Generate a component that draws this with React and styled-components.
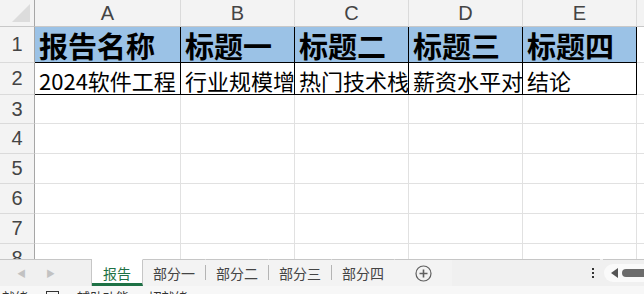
import React from 'react'
import styled, { createGlobalStyle } from 'styled-components'

const GlobalStyle = createGlobalStyle`
  html, body {
    margin: 0;
    padding: 0;
    background: #ffffff;
  }
  * {
    box-sizing: border-box;
  }
`

const columns = ['A', 'B', 'C', 'D', 'E']
const headerRow = ['报告名称', '标题一', '标题二', '标题三', '标题四']
const dataRow = ['2024软件工程', '行业规模增', '热门技术栈', '薪资水平对', '结论']
const emptyRows = [3, 4, 5, 6, 7, 8]
const sheets = ['报告', '部分一', '部分二', '部分三', '部分四']

const App = () => {
  return (
    <Window>
      <GlobalStyle />
      <Sheet>
        <Corner>
          <svg width='34' height='26' viewBox='0 0 34 26'>
            <polygon points='30,4 30,22 12,22' fill='#dcdcdc' />
          </svg>
        </Corner>
        {columns.map((c) => (
          <ColHead key={c}>{c}</ColHead>
        ))}
        <ColHead />

        <RowHead>1</RowHead>
        {headerRow.map((t) => (
          <Cell key={t} $bold $filled>
            {t}
          </Cell>
        ))}
        <Cell $plain />

        <RowHead>2</RowHead>
        {dataRow.map((t) => (
          <Cell key={t}>{t}</Cell>
        ))}
        <Cell $plain />

        {emptyRows.map((r) => (
          <React.Fragment key={r}>
            <RowHead>{r}</RowHead>
            {columns.map((c) => (
              <Cell key={c} $plain />
            ))}
            <Cell $plain />
          </React.Fragment>
        ))}
      </Sheet>

      <TabBar>
        <NavArea>
          <Arrow>◀</Arrow>
          <Arrow>▶</Arrow>
        </NavArea>
        <Tabs>
          {sheets.map((s, i) => (
            <Tab key={s} $active={i === 0}>
              {s}
            </Tab>
          ))}
        </Tabs>
        <AddArea>
          <svg width='17' height='17' viewBox='0 0 17 17'>
            <circle cx='8.5' cy='8.5' r='7.5' fill='none' stroke='#5f5f5f' strokeWidth='1.2' />
            <path d='M8.5 4.5v8M4.5 8.5h8' stroke='#5f5f5f' strokeWidth='1.6' />
          </svg>
        </AddArea>
        <Spacer />
        <Dots>
          <span />
          <span />
          <span />
        </Dots>
        <ScrollTrack>
          <svg width='8' height='10' viewBox='0 0 8 10'>
            <polygon points='7,0 7,10 0,5' fill='#555' />
          </svg>
          <Thumb />
        </ScrollTrack>
      </TabBar>

      <StatusBar>
        <span>就绪</span>
        <StatusBox />
        <span>辅助功能: 一切就绪</span>
      </StatusBar>
    </Window>
  )
}

const Window = styled.div`
  width: 644px;
  height: 294px;
  overflow: hidden;
  display: flex;
  flex-direction: column;
  background: #fff;
  font-family: 'Noto Sans CJK SC', 'Noto Sans', sans-serif;
`

const Sheet = styled.div`
  flex: 0 0 259px;
  overflow: hidden;
  display: grid;
  grid-template-columns: 35px 146px 114px 114px 114px 114px 40px;
  grid-template-rows: 27px 36px 32px 29px 30px 30px 30px 30px 30px;
`

const Corner = styled.div`
  background: #f3f3f3;
  border-right: 1px solid #a6a6a6;
  border-bottom: 1px solid #c8c8c8;
  display: flex;
`

const ColHead = styled.div`
  background: #f3f3f3;
  border-right: 1px solid #dadada;
  border-bottom: 1px solid #c8c8c8;
  color: #444;
  font-family: 'Liberation Sans', 'Noto Sans', sans-serif;
  font-size: 20px;
  display: flex;
  align-items: center;
  justify-content: center;
  padding-top: 1px;
`

const RowHead = styled.div`
  background: #f3f3f3;
  border-right: 1px solid #a6a6a6;
  border-bottom: 1px solid #dadada;
  color: #444;
  font-family: 'Liberation Sans', 'Noto Sans', sans-serif;
  font-size: 20px;
  display: flex;
  align-items: center;
  justify-content: center;
`

const Cell = styled.div`
  border-right: 1px solid ${(p) => (p.$plain ? '#e1e1e1' : '#000')};
  border-bottom: 1px solid ${(p) => (p.$plain ? '#e1e1e1' : '#000')};
  background: ${(p) => (p.$filled ? '#9bc2e6' : '#fff')};
  color: #000;
  font-size: ${(p) => (p.$bold ? '29px' : '22px')};
  font-weight: ${(p) => (p.$bold ? 700 : 400)};
  line-height: 1;
  white-space: nowrap;
  overflow: hidden;
  display: flex;
  align-items: flex-end;
  padding: 0 0 ${(p) => (p.$bold ? '2px' : '3px')} 4px;
`

const TabBar = styled.div`
  flex: 0 0 27px;
  display: flex;
  align-items: stretch;
  background: #f0f0f0;
`

const NavArea = styled.div`
  width: 92px;
  border-top: 1px solid #c6c6c6;
  border-right: 1px solid #c6c6c6;
  display: flex;
  align-items: center;
  gap: 20px;
  padding-left: 17px;
`

const Arrow = styled.span`
  color: #c2c2c2;
  font-size: 9px;
`

const Tabs = styled.div`
  display: flex;
  background: #f3f3f3;
`

const Tab = styled.div`
  position: relative;
  display: flex;
  align-items: center;
  justify-content: center;
  font-size: 14px;
  width: ${(p) => (p.$active ? '51px' : '63px')};
  color: ${(p) => (p.$active ? '#1e7145' : '#444')};
  background: ${(p) => (p.$active ? '#fff' : 'transparent')};
  border-top: 1px solid ${(p) => (p.$active ? '#fff' : '#c6c6c6')};
  border-right: 1px solid ${(p) => (p.$active ? '#c6c6c6' : 'transparent')};
  border-bottom: 3px solid ${(p) => (p.$active ? '#1e7145' : 'transparent')};
  padding-top: 2px;

  & + & {
    &::before {
      content: '';
      position: absolute;
      left: -1px;
      top: 5px;
      bottom: 3px;
      width: 1px;
      background: #b4b4b4;
    }
  }
  &:nth-child(2)::before {
    display: none;
  }
`

const AddArea = styled.div`
  width: 57px;
  background: #f3f3f3;
  border-top: 1px solid #c6c6c6;
  display: flex;
  align-items: center;
  justify-content: center;
  padding-top: 1px;
`

const Spacer = styled.div`
  flex: 1;
  border-top: 1px solid #c6c6c6;
`

const Dots = styled.div`
  width: 14px;
  margin-right: 3px;
  border-top: 1px solid #c6c6c6;
  display: flex;
  flex-direction: column;
  align-items: center;
  justify-content: center;
  gap: 2px;
  span {
    width: 2px;
    height: 2px;
    background: #333;
  }
`

const ScrollTrack = styled.div`
  flex: 0 0 41px;
  border-top: 1px solid #c6c6c6;
  display: flex;
  align-items: center;
  gap: 3px;
  padding-left: 8px;
  position: relative;
  &::before {
    content: '';
    position: absolute;
    left: 1px;
    top: 4px;
    bottom: 4px;
    right: -10px;
    border-radius: 10px;
    background: #fafafa;
  }
  svg,
  div {
    position: relative;
  }
`

const Thumb = styled.div`
  flex: 1;
  height: 8px;
  border-radius: 4px 0 0 4px;
  background: #6c6c6c;
`

const StatusBar = styled.div`
  flex: 1;
  background: #f7f7f7;
  display: flex;
  align-items: flex-start;
  gap: 18px;
  padding: 3px 0 0 2px;
  font-size: 13px;
  color: #333;
  line-height: 16px;
  white-space: nowrap;
`

const StatusBox = styled.div`
  width: 13px;
  height: 11px;
  margin-top: 2px;
  border: 1px solid #333;
`

export default App
